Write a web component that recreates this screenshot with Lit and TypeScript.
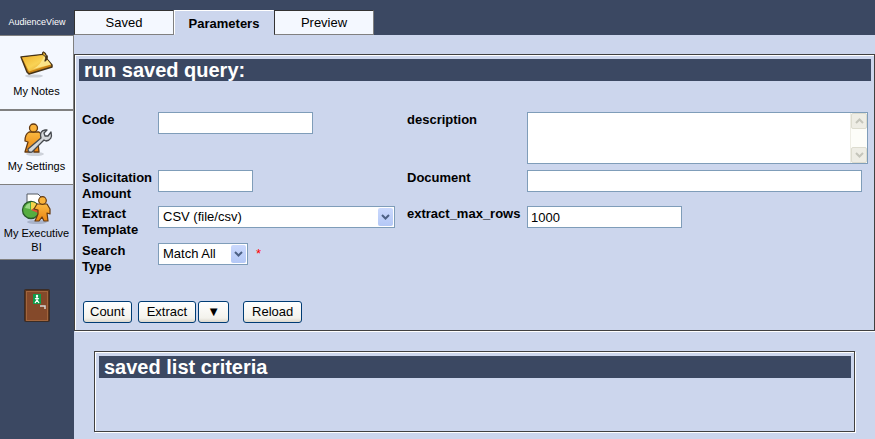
import { LitElement, html, css, svg } from "lit";
import { customElement, state } from "lit/decorators.js";
import { classMap } from "lit/directives/class-map.js";

const noteIcon = svg`
  <svg class="icon" viewBox="0 0 36 36" aria-hidden="true">
    <defs>
      <linearGradient id="note" x1="0" y1="0" x2="1" y2="1">
        <stop offset="0" stop-color="#eeb02a" /><stop offset=".5" stop-color="#f9d355" /><stop offset="1" stop-color="#d98c17" />
      </linearGradient>
    </defs>
    <ellipse cx="15" cy="29" rx="9" ry="1.6" fill="#cdd2da" />
    <path d="M2 10L24 7.5L33 18V20L10 27L8 25Z" fill="#c98314" stroke="#453317" stroke-width="1.5" stroke-linejoin="round" />
    <path d="M3 10.5L24 8L32 17.5L10 24.5Z" fill="url(#note)" />
    <path d="M14 22Q22 18 25 9L32 17.5Z" fill="#fbe487" />
    <path d="M24 8Q23 5.5 24.5 5Q29 7 26 14Q29 12 28 8.5" fill="#f0b42e" stroke="#453317" stroke-width="1.3" stroke-linejoin="round" />
  </svg>`;

const settingsIcon = svg`
  <svg class="icon" viewBox="0 0 36 36" aria-hidden="true">
    <defs>
      <linearGradient id="worker" x1="0" y1="0" x2="0" y2="1">
        <stop offset="0" stop-color="#fbb940" /><stop offset="1" stop-color="#ea8312" />
      </linearGradient>
    </defs>
    <ellipse cx="16" cy="32" rx="9" ry="2" fill="#cdd2da" />
    <path d="M10 10H20Q22 11 22 14V19L19 21L20 30H15L14 25L12 30H6L9 20L6 19Q6 12 10 10Z" fill="url(#worker)" stroke="#643a10" stroke-width="1.3" stroke-linejoin="round" />
    <circle cx="14.5" cy="6" r="4" fill="#fbb33a" stroke="#643a10" stroke-width="1.3" />
    <path d="M9 27L22 16Q20 9 26 8H28L25 11L26 14L29 14L32 10Q34 18 27 19L25 18L13 30Q9 31 9 27Z" fill="#d4d7da" stroke="#46494e" stroke-width="1.3" stroke-linejoin="round" />
  </svg>`;

const reportIcon = svg`
  <svg class="icon" viewBox="0 0 36 36" aria-hidden="true">
    <defs>
      <linearGradient id="analyst" x1="0" y1="0" x2="0" y2="1">
        <stop offset="0" stop-color="#fbb940" /><stop offset="1" stop-color="#ea8312" />
      </linearGradient>
    </defs>
    <ellipse cx="18" cy="33" rx="10" ry="2" fill="#a9b3c9" />
    <path d="M8 5H19L23 9V22H8Z" fill="#fff" stroke="#555a63" />
    <circle cx="12" cy="21" r="8.5" fill="#55ad40" stroke="#28582a" stroke-width="1.3" />
    <path d="M12 21V13A8 8 0 0 1 19 17Z" fill="#f5d34a" />
    <path d="M12 21L19 17V24Z" fill="#df5038" />
    <path d="M6 19A7 7 0 0 1 11 14V20Z" fill="#9cd886" />
    <path d="M18 15H28L31 20V25L28 24L29 32H25L23 28L20 32H16L19 25V21L15 20Z" fill="url(#analyst)" stroke="#643a10" stroke-width="1.2" stroke-linejoin="round" />
    <circle cx="23.5" cy="11.5" r="3.8" fill="#fbb33a" stroke="#643a10" stroke-width="1.2" />
  </svg>`;

const doorIcon = svg`
  <svg class="icon" viewBox="0 0 36 36" aria-hidden="true">
    <rect x="5.5" y="2.5" width="25" height="32" rx="1" fill="#5b341c" stroke="#3a2c26" />
    <rect x="7.5" y="4.5" width="21" height="29" fill="#84492a" stroke="#a2653c" />
    <rect x="14" y="7" width="8" height="10" fill="#119b4b" />
    <circle cx="18" cy="9" r="1.2" fill="#fff" />
    <path d="M18 10V13L16 16M18 13L20 16M16 12L18 11L20 12" fill="none" stroke="#fff" stroke-width="1.3" />
    <path d="M21 19H26V22" fill="none" stroke="#d5d5d5" stroke-width="1.5" />
  </svg>`;

@customElement("app-root")
class AppRoot extends LitElement {
  @state() private tab = "Parameters";

  static styles = css`
    :host {
      display: block;
      font: 13px/16px "Liberation Sans", Arial, sans-serif;
      color: #000;
    }
    * { box-sizing: border-box; }
    .page {
      display: grid;
      grid-template-columns: 74px minmax(0, 1fr);
      min-height: 100vh;
      background: #ccd6ed;
    }
    .side { background: #3b4862; display: flex; flex-direction: column; }
    .brand {
      height: 35px;
      padding-top: 14px;
      font-size: 9px;
      color: #fff;
      text-align: center;
    }
    .nav {
      display: flex;
      flex-direction: column;
      align-items: center;
      gap: 1px;
      height: 75px;
      padding-top: 11px;
      border: solid #808080;
      border-width: 1px 1px 1px 0;
      background: #f4f8ff;
      color: #000;
      font-size: 11px;
      line-height: 14px;
      text-align: center;
      text-decoration: none;
    }
    .nav.current { background: #ccd6ed; padding-top: 4px; border-top: 0; }
    .exit { display: flex; justify-content: center; padding-top: 27px; }
    .icon { display: block; width: 36px; height: 36px; flex: none; }
    .tabs { display: flex; height: 35px; padding-top: 10px; background: #3b4862; }
    .tab {
      width: 100px;
      height: 25px;
      padding: 0;
      border: 1px solid #333;
      border-color: #333 #808080 #808080 #333;
      background: #f4f8ff;
      font: inherit;
      color: inherit;
    }
    .tab.current {
      padding: 2px 0 0;
      border-color: #fff #ccd6ed #ccd6ed #fff;
      background: #ccd6ed;
      font-weight: bold;
    }
    .panel {
      border: 1px solid #404040;
      box-shadow: inset 1px 1px #fff, 1px 1px #fff;
      padding: 4px 3px 7px 4px;
    }
    .query { margin-top: 19px; }
    .list { margin: 20px 20px 0; min-height: 81px; }
    .title {
      margin: 0;
      padding-left: 5px;
      background: #3b4862;
      color: #fff;
      font-size: 20px;
      line-height: 22px;
    }
    .form {
      display: grid;
      grid-template-columns: 76px 249px 120px minmax(0, 1fr);
      grid-template-rows: 58px 36px 37px 33px;
      align-items: start;
      margin: 31px 3px 0;
    }
    .label { font-weight: bold; }
    .line { display: flex; align-items: center; gap: 8px; }
    .field {
      display: block;
      height: 22px;
      padding: 0 3px;
      border: 1px solid #7f9db9;
      border-radius: 0;
      background: #fff;
      font: inherit;
      color: inherit;
    }
    .medium { width: 155px; }
    .small { width: 95px; }
    .wide { width: calc(100% - 6px); }
    .memo-box { display: flex; width: 100%; height: 52px; border: 1px solid #7f9db9; background: #fff; }
    .memo { flex: 1; min-width: 0; height: 100%; padding: 2px; border: 0; resize: none; font: inherit; overflow: hidden; }
    .scroll { display: flex; flex-direction: column; justify-content: space-between; width: 17px; background: #fdfdf9; border-left: 1px solid #eeede5; }
    .step { display: grid; place-items: center; width: 16px; height: 16px; padding: 0; border: 1px solid #dddccf; border-radius: 2px; background: #eeede5; }
    .arrow { display: block; width: 9px; height: 6px; fill: none; stroke: #c5c5bb; stroke-width: 2; }
    .pick { position: relative; }
    .pick .field { width: 100%; padding: 0 18px 0 4px; appearance: none; }
    .pick .knob {
      position: absolute;
      top: 2px;
      right: 2px;
      display: grid;
      place-items: center;
      width: 15px;
      height: 18px;
      border-radius: 2px;
      background: linear-gradient(#cbd9fd, #b4c8f6);
      pointer-events: none;
    }
    .knob .arrow { stroke: #4d6185; }
    .template { width: 237px; }
    .match { width: 90px; }
    .required { color: #f00; }
    .actions { display: flex; gap: 6px; margin: 25px 4px 0; }
    .group { display: flex; gap: 2px; margin-right: 8px; }
    .button {
      height: 22px;
      padding: 0 6px;
      border: 1px solid #003c74;
      border-radius: 3px;
      background: linear-gradient(#fff, #f3f2ec 80%, #dcd8cc);
      font: inherit;
      color: inherit;
    }
    .button.roomy { padding: 0 8px; }
  `;

  private renderTab(name: string) {
    const current = this.tab === name;
    return html`<button role="tab" aria-selected=${current ? "true" : "false"}
      class=${classMap({ tab: true, current })} @click=${() => (this.tab = name)}>${name}</button>`;
  }

  private arrow(up = false) {
    return html`<svg class="arrow" viewBox="0 0 9 6" aria-hidden="true"><path d=${up ? "M1 5L4.5 1.5L8 5" : "M1 1L4.5 4.5L8 1"} /></svg>`;
  }

  render() {
    return html`
      <div class="page">
        <nav class="side">
          <div class="brand">AudienceView</div>
          <a class="nav" href="#notes">${noteIcon}<span>My Notes</span></a>
          <a class="nav" href="#settings">${settingsIcon}<span>My Settings</span></a>
          <a class="nav current" href="#bi">${reportIcon}<span>My Executive BI</span></a>
          <a class="exit" href="#exit" aria-label="Exit">${doorIcon}</a>
        </nav>
        <main>
          <div class="tabs" role="tablist">${["Saved", "Parameters", "Preview"].map((t) => this.renderTab(t))}</div>
          <section class="panel query">
            <h1 class="title">run saved query:</h1>
            <div class="form">
              <label class="label" for="code">Code</label>
              <input class="field medium" id="code" />
              <label class="label" for="description">description</label>
              <div class="memo-box">
                <textarea class="memo" id="description"></textarea>
                <div class="scroll">
                  <button class="step" aria-label="Scroll up">${this.arrow(true)}</button>
                  <button class="step" aria-label="Scroll down">${this.arrow()}</button>
                </div>
              </div>
              <label class="label" for="amount">Solicitation Amount</label>
              <input class="field small" id="amount" />
              <label class="label" for="document">Document</label>
              <input class="field wide" id="document" />
              <label class="label" for="template">Extract Template</label>
              <div class="pick template">
                <select class="field" id="template"><option>CSV (file/csv)</option></select>
                <span class="knob">${this.arrow()}</span>
              </div>
              <label class="label" for="rows">extract_max_rows</label>
              <input class="field medium" id="rows" value="1000" />
              <label class="label" for="match">Search Type</label>
              <div class="line">
                <div class="pick match">
                  <select class="field" id="match"><option>Match All</option></select>
                  <span class="knob">${this.arrow()}</span>
                </div>
                <span class="required">*</span>
              </div>
            </div>
            <div class="actions">
              <button class="button">Count</button>
              <div class="group">
                <button class="button roomy">Extract</button>
                <button class="button roomy" aria-label="More extract options">▼</button>
              </div>
              <button class="button roomy">Reload</button>
            </div>
          </section>
          <section class="panel list">
            <h2 class="title">saved list criteria</h2>
          </section>
        </main>
      </div>
    `;
  }
}
